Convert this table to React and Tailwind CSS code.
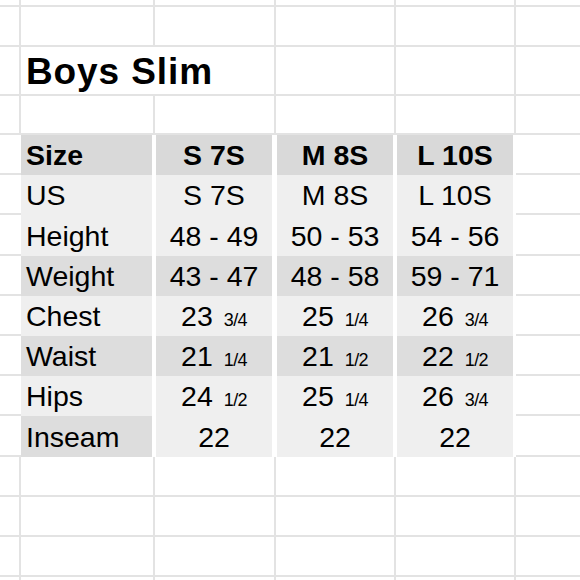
import React from "react";

const L = "border-[#e3e3e3]";

function BlankRow({ h, merged }) {
  return (
    <div className={`flex ${h}`}>
      <div className={`w-[21px] shrink-0 border-r-2 border-b-2 ${L}`} />
      {merged ? (
        <div className={`w-[255px] shrink-0 border-r-2 border-b-2 ${L} pl-[5px] flex items-center`}>
          <span className="text-[37px] font-bold leading-none tracking-[0.9px] whitespace-nowrap text-black pt-[2px]">{merged}</span>
        </div>
      ) : (
        <>
          <div className={`w-[134px] shrink-0 border-r-2 border-b-2 ${L}`} />
          <div className={`w-[121px] shrink-0 border-r-2 border-b-2 ${L}`} />
        </>
      )}
      <div className={`w-[120px] shrink-0 border-r-2 border-b-2 ${L}`} />
      <div className={`w-[120px] shrink-0 border-r-2 border-b-2 ${L}`} />
      <div className={`flex-1 border-b-2 ${L}`} />
    </div>
  );
}

function Val({ v }) {
  if (typeof v === "string") return <span>{v}</span>;
  return (
    <span className="whitespace-nowrap">
      {v[0]}
      <span className="ml-[11px] text-[18px] tracking-[-0.6px]">{v[1]}</span>
    </span>
  );
}

function TableRow({ h, label, values, bold, bgs }) {
  const weight = bold ? "font-bold" : "font-normal";
  return (
    <div className={`flex ${h}`}>
      <div className={`w-[21px] shrink-0 border-b-2 ${L}`} />
      <div className="w-[134px] shrink-0 pr-[3px]">
        <div className={`h-full ${bgs[0]} pl-[5px] pt-[1px] flex items-center ${weight} text-[28.5px] text-black whitespace-nowrap`}>
          {label}
        </div>
      </div>
      <div className="w-[121px] shrink-0 pl-[1px] pr-[4px]">
        <div className={`h-full ${bgs[1]} pt-[1px] flex items-center justify-center ${weight} text-[28.5px] text-black`}>
          <Val v={values[0]} />
        </div>
      </div>
      <div className="w-[120px] shrink-0 pl-[1px] pr-[3px]">
        <div className={`h-full ${bgs[2]} pt-[1px] flex items-center justify-center ${weight} text-[28.5px] text-black`}>
          <Val v={values[1]} />
        </div>
      </div>
      <div className="w-[120px] shrink-0 pl-[1px] pr-[3px]">
        <div className={`h-full ${bgs[3]} pt-[1px] flex items-center justify-center ${weight} text-[28.5px] text-black`}>
          <Val v={values[2]} />
        </div>
      </div>
      <div className={`flex-1 border-b-2 ${L}`} />
    </div>
  );
}

const HD = "bg-[#d9d9d9]";
const DK = "bg-[#dddddd]";
const LT = "bg-[#efefef]";

export default function App() {
  return (
    <div className="w-[580px] h-[580px] overflow-hidden bg-white font-['Liberation_Sans',Arial,sans-serif] leading-none">
      <BlankRow h="h-[7px]" />
      <BlankRow h="h-[40px]" />
      <BlankRow h="h-[49px]" merged="Boys Slim" />
      <BlankRow h="h-[39px]" />
      <TableRow h="h-[40px]" bold label="Size" values={["S 7S", "M 8S", "L 10S"]} bgs={[HD, HD, HD, HD]} />
      <TableRow h="h-[40px]" label="US" values={["S 7S", "M 8S", "L 10S"]} bgs={[LT, LT, LT, LT]} />
      <TableRow h="h-[41px]" label="Height" values={["48 - 49", "50 - 53", "54 - 56"]} bgs={[LT, LT, LT, LT]} />
      <TableRow h="h-[40px]" label="Weight" values={["43 - 47", "48 - 58", "59 - 71"]} bgs={[DK, DK, DK, DK]} />
      <TableRow h="h-[40px]" label="Chest" values={[["23", "3/4"], ["25", "1/4"], ["26", "3/4"]]} bgs={[LT, LT, LT, LT]} />
      <TableRow h="h-[40px]" label="Waist" values={[["21", "1/4"], ["21", "1/2"], ["22", "1/2"]]} bgs={[DK, DK, DK, DK]} />
      <TableRow h="h-[40px]" label="Hips" values={[["24", "1/2"], ["25", "1/4"], ["26", "3/4"]]} bgs={[LT, LT, LT, LT]} />
      <TableRow h="h-[41px]" label="Inseam" values={["22", "22", "22"]} bgs={[DK, LT, LT, LT]} />
      <BlankRow h="h-[40px]" />
      <BlankRow h="h-[40px]" />
      <BlankRow h="h-[40px]" />
      <BlankRow h="h-[40px]" />
    </div>
  );
}
